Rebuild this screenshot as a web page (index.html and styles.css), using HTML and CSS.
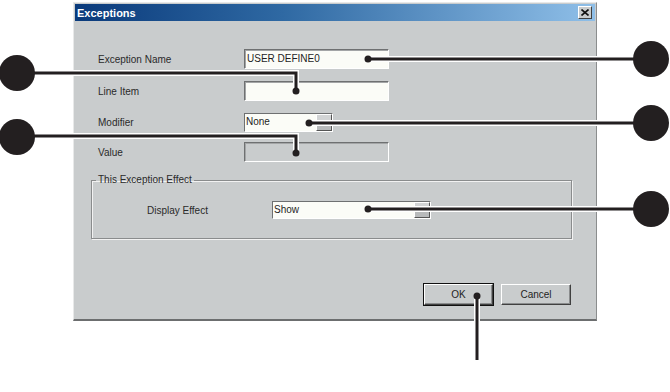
FILE: index.html
```html
<!DOCTYPE html>
<html lang="en">
<head>
    <meta charset="UTF-8">
    <title>Exceptions</title>
    <link rel="stylesheet" href="styles.css">
</head>
<body>
    <div class="page">
        <div class="dialog">
            <div class="titlebar">
                <span class="title">Exceptions</span>
                <span class="btn-close">
                    <svg width="8" height="7" viewBox="0 0 8 7"><path d="M0.5 0.5 L7.5 6.5 M7.5 0.5 L0.5 6.5" stroke="#111" stroke-width="1.6"/></svg>
                </span>
            </div>
            <div class="dialog-body">
                <div class="form">
                    <div class="row">
                        <label class="label">Exception Name</label>
                        <div class="field">USER DEFINE0</div>
                    </div>
                    <div class="row">
                        <label class="label">Line Item</label>
                        <div class="field"></div>
                    </div>
                    <div class="row row-combo">
                        <label class="label">Modifier</label>
                        <div class="combo combo-modifier"><span class="combo-text">None</span><span class="combo-btn"></span></div>
                    </div>
                    <div class="row row-value">
                        <label class="label">Value</label>
                        <div class="field field-disabled"></div>
                    </div>
                </div>

                <fieldset class="group">
                    <legend>This Exception Effect</legend>
                    <div class="group-row">
                        <label class="label label-effect">Display Effect</label>
                        <div class="combo combo-effect"><span class="combo-text">Show</span><span class="combo-btn"></span></div>
                    </div>
                </fieldset>

                <div class="actions">
                    <button type="button" class="btn btn-default">OK</button>
                    <button type="button" class="btn">Cancel</button>
                </div>
            </div>
        </div>

        <!-- callout markers -->
        <svg class="callouts" width="670" height="392" viewBox="0 0 670 392">
            <g fill="none" stroke="#fff" stroke-width="6">
                <path d="M34 73 H296 V91"/>
                <path d="M34 136 H296 V153"/>
                <path d="M368 59 H636"/>
                <path d="M309 123 H636"/>
                <path d="M368 209 H636"/>
                <path d="M477 296 V360"/>
            </g>
            <g fill="none" stroke="#231f20" stroke-width="3">
                <path d="M34 73 H296 V91"/>
                <path d="M34 136 H296 V153"/>
                <path d="M368 59 H636"/>
                <path d="M309 123 H636"/>
                <path d="M368 209 H636"/>
                <path d="M477 296 V360"/>
            </g>
            <g fill="#231f20">
                <circle cx="17" cy="73" r="18"/>
                <circle cx="17" cy="137" r="18"/>
                <circle cx="651" cy="59" r="18"/>
                <circle cx="651" cy="123" r="18"/>
                <circle cx="651" cy="209" r="18"/>
                <circle cx="296" cy="91" r="3.5"/>
                <circle cx="296" cy="153" r="3.5"/>
                <circle cx="368" cy="59" r="3.5"/>
                <circle cx="309" cy="123" r="3.5"/>
                <circle cx="368" cy="209" r="3.5"/>
                <circle cx="477" cy="296" r="3.5"/>
            </g>
        </svg>
    </div>
</body>
</html>
```

FILE: styles.css
```css
body {
    margin: 0;
    background: #fff;
    font-family: "Liberation Sans", Arial, sans-serif;
    color: #1e1e1e;
}

.page {
    position: relative;
    width: 670px;
    height: 392px;
    padding: 2px 0 0 73px;
    box-sizing: border-box;
}

.dialog {
    width: 524px;
    height: 319px;
    box-sizing: border-box;
    padding: 1px;
    background: #c9cccd;
    border-top: 1px solid #e8e9e9;
    border-left: 1px solid #e8e9e9;
    border-right: 1px solid #8b8d8e;
    border-bottom: 2px solid #6c6e6f;
}

.titlebar {
    display: flex;
    align-items: center;
    justify-content: space-between;
    height: 17px;
    padding: 0 3px 0 2px;
    background: linear-gradient(to right, #0a3a7b, #2f69a3 40%, #8fbfe8);
}

.title {
    font-size: 11px;
    font-weight: bold;
    color: #fff;
}

.btn-close {
    display: flex;
    align-items: center;
    justify-content: center;
    width: 12px;
    height: 11px;
    background: #c9cccd;
    border-top: 1px solid #fff;
    border-left: 1px solid #fff;
    border-right: 1px solid #404040;
    border-bottom: 1px solid #404040;
}

.dialog-body {
    padding: 28px 0 0 16px;
}

.form {
    padding-left: 7px;
}

.row {
    display: flex;
    align-items: center;
    margin-bottom: 12px;
}

.row-combo {
    margin-bottom: 10px;
}

.row-value {
    margin-bottom: 12px;
}

.label {
    width: 146px;
    font-size: 10px;
    color: #2a2a2a;
}

.field {
    width: 145px;
    height: 20px;
    box-sizing: border-box;
    padding: 3px 2px 0;
    font-size: 10px;
    background: #fbfcf7;
    border-top: 1px solid #6e7071;
    border-left: 1px solid #6e7071;
    border-right: 1px solid #fff;
    border-bottom: 1px solid #fff;
    box-shadow: inset 1px 1px 0 #a3a5a6;
}

.field-disabled {
    background: #c9cccd;
}

.combo {
    display: flex;
    align-items: stretch;
    height: 19px;
    box-sizing: border-box;
    font-size: 10px;
    background: #fbfcf7;
    border-top: 1px solid #6e7071;
    border-left: 1px solid #6e7071;
    border-right: 1px solid #fff;
    border-bottom: 1px solid #fff;
}

.combo-modifier {
    width: 89px;
}

.combo-effect {
    width: 159px;
    height: 18px;
}

.combo-text {
    flex: 1;
    padding: 2px 0 0 1px;
}

.combo-btn {
    width: 14px;
    background: linear-gradient(#d2d4d5 50%, #b8babb 50%);
    border-top: 1px solid #fff;
    border-left: 1px solid #fff;
    border-right: 1px solid #555;
    border-bottom: 1px solid #555;
}

.group {
    width: 481px;
    margin: 0;
    padding: 15px 0 19px 0;
    box-sizing: border-box;
    border: 1px solid #8a8c8d;
    box-shadow: inset 1px 1px 0 #f2f2f2, 1px 1px 0 #f2f2f2;
}

.group legend {
    margin-left: 4px;
    padding: 0 2px;
    font-size: 10px;
    line-height: 12px;
    color: #2a2a2a;
}

.group-row {
    display: flex;
    align-items: center;
    padding-left: 55px;
}

.label-effect {
    width: 125px;
}

.actions {
    display: flex;
    justify-content: flex-end;
    gap: 8px;
    margin: 45px 24px 0 0;
}

.btn {
    width: 70px;
    height: 21px;
    padding: 0;
    font-family: inherit;
    font-size: 10px;
    color: #1e1e1e;
    background: #c9cccd;
    border-top: 1px solid #fff;
    border-left: 1px solid #fff;
    border-right: 1px solid #404040;
    border-bottom: 1px solid #404040;
    box-shadow: inset -1px -1px 0 #8a8c8d;
}

.btn-default {
    width: 69px;
    outline: 1px solid #111;
    outline-offset: 0;
}

.callouts {
    position: absolute;
    top: 0;
    left: 0;
    pointer-events: none;
}
```
